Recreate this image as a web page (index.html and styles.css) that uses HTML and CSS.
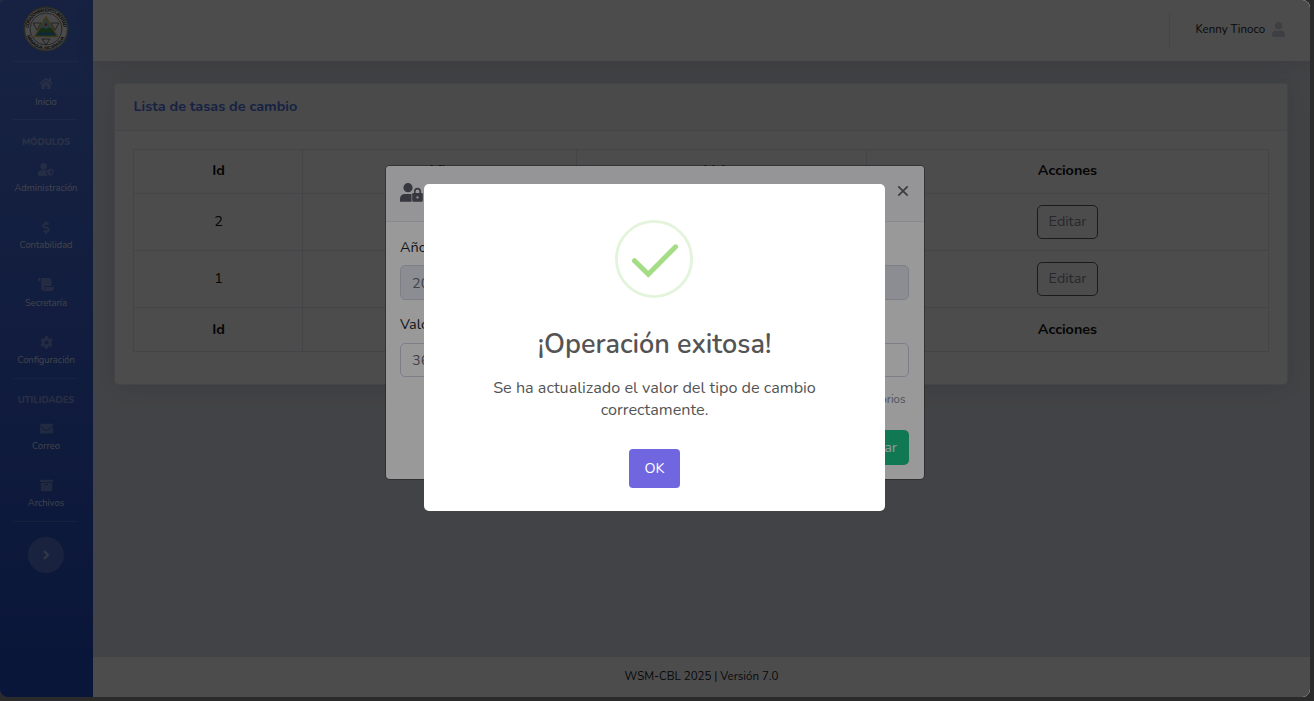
FILE: index.html
```html
<!DOCTYPE html>
<html lang="es">
<head>
<meta charset="utf-8">
<title>WSM-CBL</title>
<link rel="stylesheet" href="styles.css">
</head>
<body>
<div class="app">
  <aside class="sidebar">
    <div class="brand">
      <svg width="46" height="46" viewBox="0 0 46 46">
        <defs><path id="arc-top" d="M5.500 23A17.500 17.500 0 0 1 40.500 23"/><path id="arc-bottom" d="M3.300 28A20.300 20.300 0 0 0 42.700 28"/></defs>
        <circle cx="23" cy="23" r="22" fill="#fff" stroke="#8a9a68" stroke-width="1"/>
        <circle cx="23" cy="23" r="21.200" fill="none" stroke="#333" stroke-width=".4"/>
        <circle cx="23" cy="23" r="16" fill="#f4f4f4" stroke="#333" stroke-width=".6"/>
        <text class="seal"><textPath href="#arc-top" startOffset="1" textLength="52">CORAZÓN BENDITO LIBERTAD</textPath></text>
        <text class="seal"><textPath href="#arc-bottom" startOffset="2" textLength="48">MANAGUA, NICARAGUA</textPath></text>
        <path d="M10 17h8l-4 7zM28 17h8l-4 7zM19 33h8l-4 6z" fill="none" stroke="#555" stroke-width=".8"/>
        <path d="M23 9.500L35.500 31h-25z" fill="#d9bf53"/><path d="M23 13L32.800 29.500H13.200z" fill="#86cfe0"/>
        <path d="M17.500 22.500l3.500-1 2 1.500 3-1.500 3 1 3.800 7H13.200z" fill="#4b9d46"/><path d="M15 26.500h16l1.800 3H13.200z" fill="#3487bc"/>
        <circle cx="23" cy="18.500" r="1.300" fill="#e53934"/>
      </svg>
    </div>
    <hr>
    <a class="nav home"><svg width="14" height="13" viewBox="0 0 576 512"><path d="M280.370 148.260L96 300.110V464a16 16 0 0 0 16 16l112.060-.29a16 16 0 0 0 15.920-16V368a16 16 0 0 1 16-16h64a16 16 0 0 1 16 16v95.640a16 16 0 0 0 16 16.050L464 480a16 16 0 0 0 16-16V300L295.670 148.260a12.190 12.190 0 0 0-15.300 0zM571.600 251.470L488 182.560V44.050a12 12 0 0 0-12-12h-56a12 12 0 0 0-12 12v72.610L318.470 43a48 48 0 0 0-61 0L4.340 251.470a12 12 0 0 0-1.600 16.900l25.500 31A12 12 0 0 0 45.150 301l235.220-193.740a12.190 12.190 0 0 1 15.300 0L530.900 301a12 12 0 0 0 16.900-1.600l25.500-31a12 12 0 0 0-1.700-16.930z"/></svg><span>Inicio</span></a>
    <hr>
    <div class="heading">MÓDULOS</div>
    <a class="nav"><svg width="16" height="13" viewBox="0 0 640 512"><circle cx="224" cy="128" r="128"/><path d="M134 288C60 288 0 348 0 422v42c0 26 22 48 48 48h336c-45-45-64-105-64-224zM622 271L510 224c-9-4-21-4-30 0l-112 47c-10 5-16 14-16 24 0 119 69 186 128 214 9 4 21 4 30 0 47-20 130-90 130-214 0-10-7-20-18-24zM496 462V274l96 40c-6 80-49 127-96 148z" fill-rule="evenodd"/></svg><span>Administración</span></a>
    <a class="nav"><svg width="8" height="13" viewBox="0 0 288 512"><path d="M209 233l-108-31c-13-4-22-16-22-29 0-17 13-30 30-30h66c12 0 24 4 34 11 6 4 14 3 20-2l35-34c7-7 6-18-2-25-24-20-55-31-87-31V16c0-9-7-16-16-16h-32c-9 0-16 7-16 16v48h-2C45 64-6 120 1 187c4 48 41 86 87 100l102 30c13 4 22 16 22 29 0 17-13 30-30 30h-66c-12 0-24-4-34-11-6-4-14-3-20 2l-35 34c-7 7-6 18 2 25 24 20 55 31 87 31v48c0 9 7 16 16 16h32c9 0 16-7 16-16v-48c47-1 90-29 106-73 22-62-15-133-77-151z"/></svg><span>Contabilidad</span></a>
    <a class="nav"><svg width="16" height="13" viewBox="0 0 640 512"><path d="M48 0C22 0 0 22 0 48v64c0 9 7 16 16 16h80V48C96 22 75 0 48 0zM256 380c0-33 27-60 60-60h228V128C544 57 487 0 416 0H111c11 14 17 30 17 48v368c0 53 43 96 96 96 18 0 32-14 32-32zM320 352c-18 0-32 14-32 32v30c0 53-43 98-96 98h336c62 0 112-50 112-112v-32c0-9-7-16-16-16z"/></svg><span>Secretaría</span></a>
    <a class="nav"><svg width="13" height="13" viewBox="0 0 512 512"><path d="M487.400 315.700l-42.600-24.600c4.300-23.200 4.300-47 0-70.200l42.600-24.600c4.900-2.800 7.100-8.600 5.500-14-11.100-35.600-30-67.800-54.700-94.600-3.800-4.100-10-5.100-14.800-2.300L380.800 110c-17.900-15.400-38.500-27.300-60.800-35.100V25.800c0-5.600-3.900-10.500-9.400-11.700-36.700-8.200-74.300-7.800-109.200 0-5.500 1.200-9.400 6.100-9.400 11.700V75c-22.200 7.900-42.800 19.800-60.800 35.100L88.700 85.500c-4.900-2.800-11-1.900-14.800 2.300-24.700 26.700-43.600 58.900-54.700 94.600-1.700 5.400.6 11.200 5.500 14L67.300 221c-4.300 23.200-4.300 47 0 70.200l-42.600 24.600c-4.900 2.800-7.100 8.600-5.500 14 11.100 35.600 30 67.800 54.700 94.600 3.800 4.100 10 5.100 14.800 2.300l42.600-24.600c17.900 15.400 38.500 27.300 60.800 35.100v49.200c0 5.600 3.900 10.500 9.400 11.700 36.700 8.200 74.300 7.800 109.200 0 5.500-1.200 9.400-6.100 9.400-11.700v-49.200c22.200-7.900 42.800-19.800 60.800-35.100l42.600 24.600c4.900 2.800 11 1.900 14.800-2.300 24.700-26.700 43.600-58.900 54.700-94.600 1.500-5.500-.7-11.300-5.600-14.100zM256 336c-44.100 0-80-35.900-80-80s35.900-80 80-80 80 35.900 80 80-35.900 80-80 80z"/></svg><span>Configuración</span></a>
    <hr>
    <div class="heading utilities">UTILIDADES</div>
    <a class="nav short"><svg width="13" height="13" viewBox="0 0 512 512"><path d="M502.300 190.800c3.900-3.100 9.700-.2 9.700 4.700V400c0 26.500-21.500 48-48 48H48c-26.500 0-48-21.500-48-48V195.600c0-5 5.700-7.800 9.700-4.700 22.400 17.400 52.100 39.500 154.100 113.600 21.100 15.400 56.700 47.800 92.200 47.600 35.700.3 72-32.800 92.300-47.600 102-74.100 131.600-96.300 154-113.700zM256 320c23.200.4 56.600-29.200 73.400-41.400 132.700-96.300 142.800-104.700 173.400-128.700 5.800-4.500 9.200-11.500 9.200-18.900v-19c0-26.500-21.500-48-48-48H48c-26.500 0-48 21.500-48 48v19c0 7.400 3.400 14.300 9.200 18.900 30.600 23.900 40.700 32.400 173.400 128.700 16.800 12.200 50.200 41.800 73.400 41.400z"/></svg><span>Correo</span></a>
    <a class="nav short"><svg width="13" height="13" viewBox="0 0 512 512"><path d="M24 32h464c13 0 24 11 24 24v72H0V56c0-13 11-24 24-24zM32 160h448v288c0 18-14 32-32 32H64c-18 0-32-14-32-32zm160 44v16c0 7 5 12 12 12h104c7 0 12-5 12-12v-16c0-7-5-12-12-12H204c-7 0-12 5-12 12z" fill-rule="evenodd"/></svg><span>Archivos</span></a>
    <hr>
    <div class="toggle"><svg width="8" height="10" viewBox="0 0 8 10"><path d="M2 1l4 4-4 4" fill="none" stroke="currentColor" stroke-width="2.200"/></svg></div>
  </aside>

  <div class="content">
    <header class="topbar">
      <div class="separator"></div>
      <span class="user">Kenny Tinoco</span>
      <svg class="avatar" width="13" height="15" viewBox="0 0 448 512"><path d="M224 256c70.700 0 128-57.300 128-128S294.700 0 224 0 96 57.300 96 128s57.300 128 128 128zm89.600 32h-16.700c-22.200 10.200-46.900 16-72.900 16s-50.600-5.800-72.900-16h-16.700C60.200 288 0 348.200 0 422.400V464c0 26.500 21.500 48 48 48h352c26.500 0 48-21.500 48-48v-41.600c0-74.200-60.200-134.400-134.400-134.400z"/></svg>
    </header>
    <main class="main">
      <section class="card">
        <h6 class="card-header"><span>Lista de tasas de cambio</span></h6>
        <div class="card-body">
          <table>
            <colgroup><col class="c1"><col class="c2"><col class="c3"><col class="c4"></colgroup>
            <thead><tr><th>Id</th><th>Año</th><th>Valor</th><th>Acciones</th></tr></thead>
            <tbody>
              <tr><td>2</td><td></td><td></td><td><button class="edit">Editar</button></td></tr>
              <tr><td>1</td><td></td><td></td><td><button class="edit">Editar</button></td></tr>
            </tbody>
            <tfoot><tr><th>Id</th><th></th><th></th><th>Acciones</th></tr></tfoot>
          </table>
        </div>
      </section>
    </main>
    <footer class="footer"><span>WSM-CBL 2025 | Versión 7.0</span></footer>
  </div>

  <div class="backdrop modal-layer">
    <div class="modal">
      <div class="modal-header">
        <svg width="23" height="19" viewBox="0 0 23 19"><circle cx="8" cy="4.700" r="4.600"/><path d="M0 18.200v-2.400C0 12.600 2 11 5 11h6.500v7.800H1q-1 0-1-.6z"/><path d="M13.500 10h8q1.300 0 1.300 1.300v6.200q0 1.300-1.300 1.300h-8q-1.300 0-1.300-1.300v-6.200q0-1.300 1.300-1.300zm4 3.200a1.200 1.200 0 1 0 .01 0z" fill-rule="evenodd"/><path d="M14.800 11V8.300a2.700 2.700 0 0 1 5.400 0V11" fill="none" stroke="currentColor" stroke-width="1.600"/></svg>
        <svg class="close" width="12" height="12" viewBox="0 0 12 12"><path d="M1.300 1.300l9.400 9.400M10.700 1.300l-9.400 9.400" stroke="currentColor" stroke-width="1.800"/></svg>
      </div>
      <div class="modal-body">
        <label>Año</label>
        <div class="field disabled">2025</div>
        <label>Valor</label>
        <div class="field">36.62</div>
        <small>Campos obligatorios</small>
        <button class="save">Actualizar</button>
      </div>
    </div>
  </div>

  <div class="backdrop alert-layer">
    <div class="alert">
      <svg class="success" width="78" height="78" viewBox="0 0 78 78"><circle cx="39" cy="39" r="37.600" fill="none" stroke="#e3f4db" stroke-width="2.800"/><path d="M19.500 40.700L33.300 54.300 60.600 26.800" fill="none" stroke="#a5dc86" stroke-width="5" stroke-linecap="round"/></svg>
      <h2><span>¡Operación exitosa!</span></h2>
      <p><span>Se ha actualizado el valor del tipo de cambio</span><br><span>correctamente.</span></p>
      <button class="ok">OK</button>
    </div>
  </div>
</div>
</body>
</html>
```
FILE: styles.css
```css
* { box-sizing: border-box; }
body { margin: 0; background: #2b2b2b; font: 14.4px/21px Nunito, Lato, sans-serif; color: #212529; }
button { font: inherit; }
.app { position: relative; display: flex; width: 1310px; height: 697px; overflow: hidden; border-radius: 4px 8px 8px 8px; }

.sidebar { width: 93px; flex: none; background: linear-gradient(180deg, #4e73df 10%, #224abe 100%); color: rgba(255,255,255,.8); text-align: center; }
.brand { height: 61px; padding: 6px 0 0 22.5px; text-align: left; }
.seal { font: bold 4.4px "Liberation Sans", sans-serif; fill: #222; }
hr { width: 65px; height: 1px; margin: 0 0 0 13px; border: 0; background: rgba(255,255,255,.15); }
.nav { display: flex; flex-direction: column; align-items: center; width: 92px; height: 57.4px; padding-top: 15px; font-size: 9.36px; line-height: 14px; }
.nav.short { height: 57px; }
.nav svg { fill: rgba(255,255,255,.3); margin-bottom: 4.5px; }
.heading { width: 92px; padding-top: 15px; height: 28px; font-size: 9.36px; line-height: 14px; font-weight: 800; color: rgba(255,255,255,.4); }
.heading.utilities { padding-top: 14px; }
.toggle { display: grid; place-items: center; width: 36px; height: 36px; margin: 15px 0 0 28px; border-radius: 50%; background: rgba(255,255,255,.2); color: rgba(255,255,255,.5); }

.content { flex: 1; display: flex; flex-direction: column; background: #dfe2ea; }
.topbar { display: flex; align-items: center; height: 61px; padding: 0 0 2px 1076px; background: #fff; box-shadow: 0 2px 24px rgba(58,59,69,.15); }
.separator { width: 1px; height: 36px; margin-top: 2px; background: #e3e6f0; }
.user { width: 71px; margin-left: 25.5px; font-size: 11.52px; color: #222; white-space: nowrap; }
.avatar { margin-left: 5.5px; fill: #d1d3e2; }
.main { flex: 1; padding: 22px 22px 0 21px; }
.card { height: 302px; border: 1px solid #e3e6f0; border-radius: 5px; background: #fff; box-shadow: 0 2px 24px rgba(58,59,69,.15); }
.card-header { height: 47px; margin: 0; padding: 12px 18.5px; border-bottom: 1px solid #e3e6f0; background: #f8f9fc; color: #4e73df; font-size: 14.4px; font-weight: 700; }
.card-body { padding: 18px; }
table { width: 1136px; border-collapse: collapse; table-layout: fixed; text-align: center; color: #111; }
th, td { padding: 0 0 1px 1px; border: 1px solid #e3e6f0; }
th { height: 44px; }
td { height: 57px; }
thead th { padding-bottom: 3px; }
td:last-child, tfoot th { padding-bottom: 0; }
th:last-child, td:last-child { padding-left: 0; }
.c1 { width: 169px; } .c2 { width: 274px; } .c3 { width: 290px; }
.edit { width: 61px; height: 34px; padding: 0 0 2px; border: 1px solid #5a5c69; border-radius: 5px; background: none; color: #858796; }
.footer { display: grid; place-items: center; height: 40px; padding-bottom: 2px; background: #fff; font-size: 11.52px; }

.backdrop { position: absolute; inset: 0; }
.modal-layer { padding: 166px 0 0 386px; background: rgba(0,0,0,.5); }
.modal { width: 538px; height: 313px; overflow: hidden; border-radius: 4px; background: #fff; box-shadow: 0 0 0 1px rgba(0,0,0,.3); }
.modal-header { display: flex; justify-content: space-between; height: 56px; padding: 17px 15px 0 14px; border-bottom: 1px solid #e3e6f0; background: #f8f9fc; color: #5a5c69; }
.modal-header svg { fill: currentColor; }
.modal-header .close { margin: 2px .5px 0 0; color: #666; }
.modal-body { display: flex; flex-direction: column; padding: 15px 15px 0 14px; }
label { height: 21px; margin-bottom: 7px; }
.field { height: 34px; padding: 6px 11px 4px; margin-bottom: 12px; border: 1px solid #d1d3e2; border-radius: 5px; color: #6e707e; }
.disabled { height: 35px; padding-top: 7px; margin-bottom: 14px; background: #eaecf4; }
.disabled + label { margin-bottom: 8px; }
small { align-self: flex-end; margin-right: 3.5px; font-size: 11.52px; line-height: 20px; color: #858796; }
.save { align-self: flex-end; height: 35px; margin-top: 21px; padding: 0 12px; border: 0; border-radius: 5px; background: #1cc88a; color: #fff; }

.alert-layer { padding: 184px 0 0 424px; background: rgba(0,0,0,.4); }
.alert { display: flex; flex-direction: column; align-items: center; width: 461px; height: 327px; padding-top: 36px; border-radius: 5px; background: #fff; color: #545454; text-align: center; }
.success { margin-right: 1px; }
h2 { margin: 29px 0 0; font-size: 27px; line-height: 36px; font-weight: 600; }
p { margin: 14px 0 0; font-size: 16.2px; line-height: 22px; }
.ok { width: 51px; height: 39px; margin-top: 28px; border: 0; border-radius: 4px; background: #7066e0; color: #fff; }
```
